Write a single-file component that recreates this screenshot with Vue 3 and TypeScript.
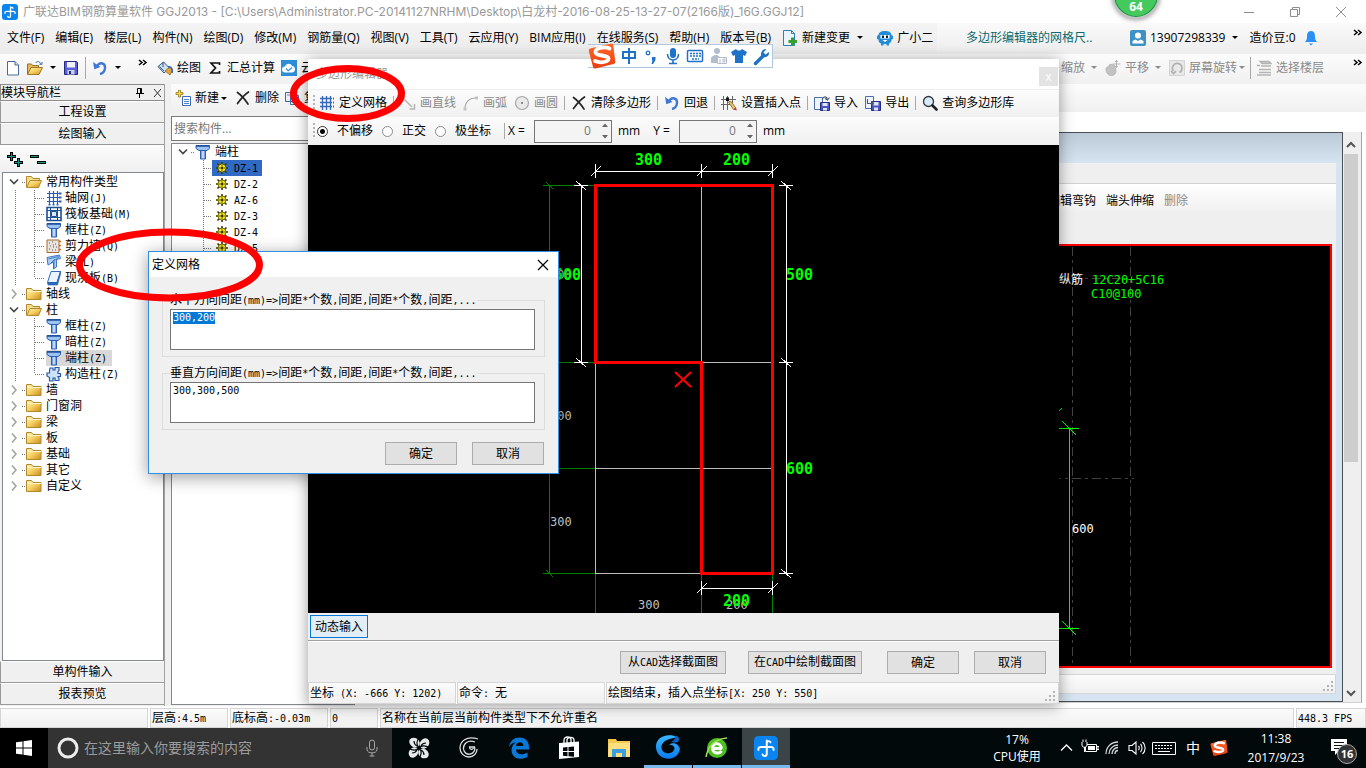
<script setup lang="ts">
import { h, onMounted, ref } from 'vue'

/* Sets Latin runs in a half-width monospace face next to full-width characters. */
const SongText = (props: { t: string }) =>
  h(
    'span',
    { class: 'song' },
    props.t
      .split(/([\x20-\x7e]+)/)
      .filter((s) => s.length > 0)
      .map((s) => (/^[\x20-\x7e]/.test(s) ? h('span', { class: 'half' }, s) : s)),
  )
SongText.props = ['t']

interface TreeRow {
  text: string
  icon: string
  level: number
  open?: boolean
  last?: boolean
  selected?: boolean
}

const menus: string[] = [
  '文件(F)', '编辑(E)', '楼层(L)', '构件(N)', '绘图(D)', '修改(M)', '钢筋量(Q)',
  '视图(V)', '工具(T)', '云应用(Y)', 'BIM应用(I)', '在线服务(S)', '帮助(H)', '版本号(B)',
]

const navRows: TreeRow[] = [
  { text: '常用构件类型', icon: 'folder-open', level: 0, open: true },
  { text: '轴网(J)', icon: 'axis', level: 1 },
  { text: '筏板基础(M)', icon: 'raft', level: 1 },
  { text: '框柱(Z)', icon: 'column', level: 1 },
  { text: '剪力墙(Q)', icon: 'wall', level: 1 },
  { text: '梁(L)', icon: 'beam', level: 1 },
  { text: '现浇板(B)', icon: 'slab', level: 1, last: true },
  { text: '轴线', icon: 'folder', level: 0 },
  { text: '柱', icon: 'folder-open', level: 0, open: true },
  { text: '框柱(Z)', icon: 'column', level: 1 },
  { text: '暗柱(Z)', icon: 'column', level: 1 },
  { text: '端柱(Z)', icon: 'column', level: 1, selected: true },
  { text: '构造柱(Z)', icon: 'puzzle', level: 1, last: true },
  { text: '墙', icon: 'folder', level: 0 },
  { text: '门窗洞', icon: 'folder', level: 0 },
  { text: '梁', icon: 'folder', level: 0 },
  { text: '板', icon: 'folder', level: 0 },
  { text: '基础', icon: 'folder', level: 0 },
  { text: '其它', icon: 'folder', level: 0 },
  { text: '自定义', icon: 'folder', level: 0 },
]

const parts: string[] = ['DZ-1', 'DZ-2', 'AZ-6', 'DZ-3', 'DZ-4', 'DZ-5']

interface Tool {
  text?: string
  icon?: string
  off?: boolean
  sep?: boolean
}
const editorTools: Tool[] = [
  { text: '定义网格', icon: 'grid' },
  { sep: true },
  { text: '画直线', icon: 'line', off: true },
  { text: '画弧', icon: 'arc', off: true },
  { text: '画圆', icon: 'round', off: true },
  { sep: true },
  { text: '清除多边形', icon: 'cross' },
  { sep: true },
  { text: '回退', icon: 'undo' },
  { sep: true },
  { text: '设置插入点', icon: 'insert' },
  { sep: true },
  { text: '导入', icon: 'import' },
  { text: '导出', icon: 'export' },
  { sep: true },
  { text: '查询多边形库', icon: 'search' },
]

const offset = ref('none')
const offsets = [
  { id: 'none', label: '不偏移' },
  { id: 'ortho', label: '正交' },
  { id: 'polar', label: '极坐标' },
]
const dx = ref('0')
const dy = ref('0')
const horizontal = ref('300,200')
const vertical = ref('300,300,500')
const first = ref<HTMLTextAreaElement | null>(null)

onMounted(() => {
  first.value?.focus()
  first.value?.select()
})

const ticksTop = [595, 701, 772]
const ticksRight = [185, 362, 573]
</script>

<template>
  <div class="desktop">
    <svg class="defs" width="0" height="0" aria-hidden="true">
      <defs>
        <linearGradient id="gFolder" x1="0" y1="0" x2="1" y2="1">
          <stop offset="0" stop-color="#fff3b0" /><stop offset=".5" stop-color="#f6cf62" /><stop offset="1" stop-color="#c98a1b" />
        </linearGradient>
        <linearGradient id="gBlue" x1="0" y1="0" x2="1" y2="0">
          <stop offset="0" stop-color="#2f6fd6" /><stop offset=".5" stop-color="#e8f2ff" /><stop offset="1" stop-color="#2f6fd6" />
        </linearGradient>
        <linearGradient id="gS" x1="0" y1="0" x2="0" y2="1">
          <stop offset="0" stop-color="#ff6a2a" /><stop offset="1" stop-color="#ec3c0c" />
        </linearGradient>
        <linearGradient id="gG" x1="0" y1="0" x2="0" y2="1">
          <stop offset="0" stop-color="#38b6ff" /><stop offset="1" stop-color="#0a7df0" />
        </linearGradient>
      </defs>
      <symbol id="brand" viewBox="0 0 16 16">
        <rect width="16" height="16" rx="3" fill="#0a84ee" />
        <path d="M8.500 3v9c0 1.800-2.300 1.800-2.800.3M3 9.300C2.600 7.600 3.600 7.300 5 7.300h6c1.500 0 2.300 .5 2 2M8.500 4.500c.8-1.400 2-1.400 2.500-.3" fill="none" stroke="#fff" stroke-width="1.300" stroke-linecap="round" />
      </symbol>
      <symbol id="newdoc" viewBox="0 0 16 16"><path d="M2.500 1.500h7.500l3.500 3.500v10h-11z" fill="#fff" stroke="#4a6a94" /><path d="M10 1.500V5h3.500" fill="#cfe0f4" stroke="#4a6a94" /></symbol>
      <symbol id="open" viewBox="0 0 16 16"><path d="M.5 14V4h4l1 1.500h6V8" fill="#e7b958" stroke="#94722a" /><path d="M.5 14.500 4 7.500h11.500l-3.500 7z" fill="url(#gFolder)" stroke="#a07a26" /><path d="M8.500 3c1.500-2.200 4.500-1.700 5 .8M15 2v2.300h-2.500" fill="none" stroke="#3e6ca8" /></symbol>
      <symbol id="save" viewBox="0 0 16 16"><path d="M1.500 1.500h12l1 1v12h-13z" fill="#5a60d8" stroke="#23277c" /><path d="M4 2h8v5.500H4z" fill="#eef3fb" /><path d="M4.500 10h7v4.500h-7z" fill="#c9d3e6" /><path d="M6 11h2v3H6z" fill="#26298a" /></symbol>
      <symbol id="undo" viewBox="0 0 16 16"><path d="M5 6.200C8 1.500 13.500 3 13 8c-.3 3.200-2.500 5.500-5 6" fill="none" stroke="#3f78d4" stroke-width="2.400" /><path d="M1 2l1.300 7.200L8.500 7z" fill="#3f78d4" /></symbol>
      <symbol id="paint" viewBox="0 0 16 16"><path d="M1 6.500 6.500 2l6 6-5.500 5z" fill="#cfe0f2" stroke="#33557e" /><path d="M2.500 6.500 7 11M6 2v5" stroke="#33557e" fill="none" /><path d="M8 11l5 4 2.500-5-3.500-2.500z" fill="#e6a23c" stroke="#8a5c14" stroke-width=".7" /><path d="M11 7c3-1 5 2 4 6" fill="none" stroke="#2c62b4" stroke-width="1.500" /></symbol>
      <symbol id="sigma" viewBox="0 0 16 16"><path d="M12.500 5V3H4l4.500 5L4 13h8.500v-2" fill="none" stroke="#111" stroke-width="1.700" /></symbol>
      <symbol id="cloud" viewBox="0 0 16 16"><rect width="16" height="16" fill="#2d8ed6" /><path d="M4 12.500a3 3 0 0 1 0-6C5 3 10 3 11 6c4 0 4 6.500 0 6.500z" fill="#fff" /><path d="M5 8.500l2.300 2.300L11 7.500" stroke="#2d8ed6" fill="none" stroke-width="1.200" /></symbol>
      <symbol id="create" viewBox="0 0 16 16"><path d="M3.500 0h2v2.500H8v2H5.500V7h-2V4.500H1v-2h2.500z" fill="#f7dc45" stroke="#95781a" stroke-width=".8" /><path d="M7.500 6.500h8v9h-8z" fill="#fff" stroke="#3b6db8" /><path d="M9 9.500h5M9 11.500h5M9 13.500h5" stroke="#4f82cc" /></symbol>
      <symbol id="cross" viewBox="0 0 16 16"><path d="M2.500 2.500C6 5 10 9.500 13 14M13.500 2C9 5 5 10 2.500 13.500" stroke="#262626" stroke-width="1.700" fill="none" stroke-linecap="round" /></symbol>
      <symbol id="copy" viewBox="0 0 16 16"><path d="M1.500 2.500h8v9h-8zM6.500 5.500h8v9h-8z" fill="#e6effa" stroke="#3d68a8" /><path d="M8 8.500h5M8 10.500h5M8 12.500h5M3 5h3" stroke="#5d88c4" /></symbol>
      <symbol id="grid" viewBox="0 0 16 16"><path d="M3.500 1v14M7.500 1v14M11.500 1v14M1 3.500h12M1 7.500h12M1 11.500h12" stroke="#3668ba" stroke-width="1.300" /><path d="M14 2.500h1v2h-1zM14 6.500h1v2h-1zM14 10.500h1v2h-1z" fill="#3668ba" /></symbol>
      <symbol id="line" viewBox="0 0 16 16"><path d="M2 2l10 10M14.500 9v5h-5" stroke="#b5b5b5" stroke-width="1.500" fill="none" /></symbol>
      <symbol id="arc" viewBox="0 0 16 16"><path d="M2 14C2 7 6 3 13 3" stroke="#a8a8a8" stroke-width="1.200" fill="none" /><path d="M12 1.500h3v3h-3zM.5 12.500h3v3h-3z" fill="#c4c4c4" /></symbol>
      <symbol id="round" viewBox="0 0 16 16"><circle cx="8" cy="8" r="6.500" fill="#e9e9e9" stroke="#a8a8a8" stroke-width="1.200" /><path d="M7 7h2v2H7z" fill="#8e8e8e" /></symbol>
      <symbol id="insert" viewBox="0 0 16 16"><path d="M2.500 1v14M6.500 1v14M11.500 1v7M0 4.500h15M0 9.500h9" stroke="#666" /><path d="M5 2.500h3v3.500H5z" fill="#111" /><path d="M7.500 7l2-1 5 6.500-2 2z" fill="#eec65d" stroke="#7a5a1e" stroke-width=".8" /><path d="M12.500 14.500l2.500-2 .8 3z" fill="#b33" /></symbol>
      <symbol id="import" viewBox="0 0 16 16"><path d="M.5 2.500h8v12h-8z" fill="#eef4fc" stroke="#4b6fa8" /><path d="M6.500 7.500h9v8h-9z" fill="#4a54c4" stroke="#272c80" /><path d="M8.500 8h5v3h-5zM9 13h4v2.500H9z" fill="#dfe6f5" /><path d="M8 4.500c2-4 5-3 5.500 0M15.500 2.500l-2 2.500-2.500-1.500" fill="none" stroke="#4c5a74" stroke-width="1.100" /></symbol>
      <symbol id="export" viewBox="0 0 16 16"><path d="M.5 1.500h8v12h-8z" fill="#eef4fc" stroke="#4b6fa8" /><path d="M6.500 6.500h9v9h-9z" fill="#4a54c4" stroke="#272c80" /><path d="M8.500 7h5v3.500h-5zM9 12.500h4v3H9z" fill="#dfe6f5" /><path d="M2.500 4v4.500h6M6.500 6.500l2 2-2 2" fill="none" stroke="#4c5a74" stroke-width="1.100" /></symbol>
      <symbol id="search" viewBox="0 0 16 16"><circle cx="6.500" cy="6.500" r="5" fill="#d9ebfa" stroke="#33383f" stroke-width="1.300" /><path d="M10.500 10.500l4 4" stroke="#1d2026" stroke-width="2.600" stroke-linecap="round" /></symbol>
      <symbol id="hand" viewBox="0 0 16 16"><path d="M1 8l2-1.500 1 .5V5l2-1 1 1 1.500-.5L10 6l1 5c0 3-2 4.500-5 4.500S2 13 1 11z" fill="#c2c2c2" stroke="#aaa" stroke-width=".6" /><path d="M11.500 0v8M7.500 4h8M10 1.500h3M10 6.500h3" stroke="#b5b5b5" /></symbol>
      <symbol id="rotate" viewBox="0 0 16 16"><path d="M.5.5h15v15H.5z" fill="#e8e8e8" stroke="#d4d4d4" /><path d="M4 11c-2-5 1.500-8 5-7.500 5 1 5 7 1.500 9M2 11l2.500 2.500L7 11" fill="none" stroke="#b0b0b0" stroke-width="1.700" /></symbol>
      <symbol id="floors" viewBox="0 0 16 16"><path d="M4 1.500h9l2 2H6zM1 5.500h3M5 6h10M3 9.500h12M3 12.500h12M1 15h14" fill="#ccc" stroke="#b4b4b4" stroke-width="1.300" /></symbol>
      <symbol id="more" viewBox="0 0 10 8"><path d="M1 1l3 2.500L1 6M5 1l3 2.500L5 6" fill="none" stroke="#000" stroke-width="1.500" /></symbol>
      <symbol id="change" viewBox="0 0 16 16"><path d="M1.500.5h8l3 3v12h-11z" fill="#eaf5fd" stroke="#2f7fb8" /><path d="M9.500.5v3h3" fill="none" stroke="#2f7fb8" /><path d="M9 7.500h3V10h3v3h-3v3H9v-3H6.500v-3H9z" fill="#35a32b" /></symbol>
      <symbol id="robot" viewBox="0 0 16 16"><path d="M0 6l1.500-1C2 2 4 1 8 1s6 1 6.500 4L16 6v3l-1.500.5c0 2.500-1 3.500-2.500 4v2H9.500V14h-3v1.500H4v-2c-1.500-.5-2.500-1.500-2.500-4L0 9z" fill="#238dd8" /><path d="M3.500 5h9v3.500h-9z" fill="#fff" /><path d="M5 5.500h2v2.500H5zM9 5.500h2v2.500H9z" fill="#123" /><path d="M5.500 10h5L8 12z" fill="#fff" /></symbol>
      <symbol id="user" viewBox="0 0 16 16"><rect width="16" height="16" rx="2" fill="#3e91c4" /><circle cx="8" cy="5.500" r="3" fill="#fff" /><path d="M2.500 13.500V11l3-1.500L8 11l2.500-1.500 3 1.500v2.500z" fill="#fff" /></symbol>
      <symbol id="bell" viewBox="0 0 14 16"><path d="M7 1c3.500 0 4 3 4 6s1 3.500 2 5H1c1-1.500 2-2 2-5s.5-6 4-6z" fill="#2b90f5" /><path d="M5 13.500h4L7 15.500z" fill="#2b90f5" /></symbol>
      <symbol id="folder" viewBox="0 0 16 16"><path d="M.5 13.500v-11h5l1.500 2h8v9z" fill="url(#gFolder)" stroke="#b0892e" /><path d="M1 5.500h14" stroke="#fff7d0" /></symbol>
      <symbol id="folder-open" viewBox="0 0 16 16"><path d="M.5 13V2.500h5L7 4.500h6.500V7" fill="#f7dc8c" stroke="#b0892e" /><path d="M.7 13.500 4 6.500h11.500l-3 7z" fill="url(#gFolder)" stroke="#b0892e" /></symbol>
      <symbol id="axis" viewBox="0 0 16 16"><path d="M3.500 1v13M7.500 1v13M11.500 1v13M1 3.500h12M1 7.500h12M1 11.500h12" stroke="#2b5cae" stroke-width="1.200" /><path d="M13 2.500h2.500v2H13zM13 6.500h2.500v2H13zM13 10.500h2.500v2H13zM2.500 14h2v1.500h-2zM6.500 14h2v1.500h-2zM10.500 14h2v1.500h-2z" fill="#2b5cae" /></symbol>
      <symbol id="raft" viewBox="0 0 16 16"><path d="M1 1.500h14v13H1z" fill="#fff" stroke="#1d4f93" stroke-width="1.600" /><path d="M4.500 2v12M11.500 2v12M1 4.500h14M1 11.500h14" stroke="#1d4f93" /><path d="M5.500 5.500h5v5h-5z" fill="#dbe9fa" stroke="#1d4f93" /></symbol>
      <symbol id="column" viewBox="0 0 16 16"><path d="M1 1.500h13.500v3L12 6.500H4L1 4.500z" fill="#9cc3f5" stroke="#2a5faf" /><path d="M1 2h13.500" stroke="#1c4c97" stroke-width="1.500" /><path d="M5.500 6.500h5v8.500h-5z" fill="url(#gBlue)" stroke="#2a5faf" /></symbol>
      <symbol id="wall" viewBox="0 0 16 16"><path d="M1 2h12v12.500H1z" fill="#e9e4df" stroke="#a8672d" /><path d="M13 3.500h2M13 7.500h2M13 11.500h2" stroke="#d06a1b" stroke-width="1.500" /><path d="M3 5h1M6 4h1M9 6h1M4 8h1M7 9h1M10 9h1M3 11h1M6 12h1M9 12h1M7 7h1" stroke="#555" /></symbol>
      <symbol id="beam" viewBox="0 0 16 16"><path d="M1 3.500 13.500 1l1 3.500-4 1V13l-3 2V8L2 11z" fill="#a9cdf5" stroke="#3c78c4" /><path d="M2.500 5l10-2.500M5 9l4-4M8 14V7l5-4" stroke="#2f6ab8" stroke-width=".8" fill="none" /></symbol>
      <symbol id="slab" viewBox="0 0 16 16"><path d="M5 1.500h9.500L11 12.500H1.500z" fill="#eaf3ff" stroke="#2f6cc0" /><path d="M1.500 12.500H11l3.500-11v2.500L11.500 15H2z" fill="#2f6cc0" stroke="#245aa8" stroke-width=".6" /></symbol>
      <symbol id="puzzle" viewBox="0 0 16 16"><path d="M4 2h3v2h2V1.500h4v3l-1 1v2h2.500v3H12l1 1.500v2.500H9V12H7v3H3.500v-3.500L1 10V7h2.500V5z" fill="#cfe1f8" stroke="#245aa8" stroke-width="1.200" /></symbol>
      <symbol id="gear" viewBox="0 0 12 12"><path d="M6 0v12M0 6h12M1.500 1.500l9 9M10.500 1.500l-9 9" stroke="#3c3900" stroke-width="1.600" /><circle cx="6" cy="6" r="4" fill="#f2e61e" stroke="#55500a" stroke-width=".8" /><path d="M6 3v6M3 6h6" stroke="#55500a" stroke-width=".8" /><circle cx="6" cy="6" r="1.200" fill="#3c3900" /></symbol>
      <symbol id="sogou" viewBox="0 0 28 28"><path d="M2 6.500 23 1.500q2-.3 2.300 1.500l2 16.500q.2 2-1.800 2.500L7.500 26.500q-2 .3-2.500-1.500L.8 9Q.5 7 2 6.500z" fill="url(#gS)" /><path d="M21.500 6.500C16 4 7 6 7.500 10.500c.5 4 12.500 2 13 6 .3 3.500-8 5-13.500 2.500" fill="none" stroke="#fff" stroke-width="3.800" stroke-linecap="round" /></symbol>
      <symbol id="grip" viewBox="0 0 12 12"><path d="M8 0h2v2H8zM8 4h2v2H8zM4 4h2v2H4zM8 8h2v2H8zM4 8h2v2H4zM0 8h2v2H0z" fill="#b4b4b4" /></symbol>
    </svg>

    <header class="titlebar">
      <svg class="i16"><use href="#brand" /></svg>
      <span class="caption">广联达BIM钢筋算量软件 GGJ2013 - [C:\Users\Administrator.PC-20141127NRHM\Desktop\白龙村-2016-08-25-13-27-07(2166版)_16G.GGJ12]</span>
      <div class="winbtns">
        <button type="button" aria-label="最小化"><svg width="12" height="12" viewBox="0 0 12 12"><path d="M1 6.500h10" stroke="#8c8c8c" /></svg></button>
        <button type="button" aria-label="还原"><svg width="12" height="12" viewBox="0 0 12 12"><path d="M1.500 3.500h7v7h-7zM3.500 3.500v-2h7v7h-2" fill="none" stroke="#8c8c8c" /></svg></button>
        <button type="button" aria-label="关闭"><svg width="12" height="12" viewBox="0 0 12 12"><path d="M1 1l10 10M11 1L1 11" stroke="#8c8c8c" /></svg></button>
      </div>
    </header>

    <nav class="menubar">
      <div class="menus">
        <button v-for="m in menus" :key="m" type="button">{{ m }}</button>
        <button type="button" class="withicon"><svg class="i16"><use href="#change" /></svg>新建变更<i class="dd"></i></button>
        <button type="button" class="withicon"><svg class="i16"><use href="#robot" /></svg>广小二</button>
      </div>
      <div class="news"><a href="#news">多边形编辑器的网格尺..</a></div>
      <div class="account">
        <button type="button" class="withicon"><svg class="i16"><use href="#user" /></svg>13907298339<i class="dd"></i></button>
        <span>造价豆:0</span>
        <svg class="bell"><use href="#bell" /></svg>
        <svg class="more"><use href="#more" /></svg>
      </div>
    </nav>

    <div class="toolbar">
      <div class="strip files">
        <button type="button" aria-label="新建"><svg class="i16"><use href="#newdoc" /></svg></button>
        <button type="button" aria-label="打开"><svg class="i16"><use href="#open" /></svg><i class="dd"></i></button>
        <button type="button" aria-label="保存"><svg class="i16"><use href="#save" /></svg></button>
        <i class="sep"></i>
        <button type="button" aria-label="撤销"><svg class="i16"><use href="#undo" /></svg><i class="dd"></i></button>
        <svg class="more"><use href="#more" /></svg>
      </div>
      <div class="strip draw">
        <button type="button"><svg class="i16"><use href="#paint" /></svg>绘图</button>
        <button type="button"><svg class="i16"><use href="#sigma" /></svg>汇总计算</button>
        <button type="button"><svg class="i16"><use href="#cloud" /></svg>云检查</button>
      </div>
      <div class="strip view">
        <button type="button" disabled>缩放<i class="dd"></i></button>
        <button type="button" disabled><svg class="i16"><use href="#hand" /></svg>平移<i class="dd"></i></button>
        <button type="button" disabled><svg class="i16"><use href="#rotate" /></svg>屏幕旋转<i class="dd near"></i></button>
        <i class="sep"></i>
        <button type="button" disabled><svg class="i16"><use href="#floors" /></svg>选择楼层</button>
        <svg class="more"><use href="#more" /></svg>
      </div>
    </div>

    <main class="work">
      <aside class="nav">
        <div class="navhead">
          <SongText t="模块导航栏" />
          <svg width="30" height="12" viewBox="0 0 30 12"><path d="M3.500 1.500h4v5h-4zM6.500 2v4M2 6.500h8M5.500 7v4" fill="none" stroke="#000" /><path d="M20 2l7 8M27 2l-7 8" stroke="#333" /></svg>
        </div>
        <button type="button" class="bar"><SongText t="工程设置" /></button>
        <button type="button" class="bar"><SongText t="绘图输入" /></button>
        <div class="expand">
          <svg width="44" height="20" viewBox="0 0 44 20"><g stroke="#000" stroke-width="3"><path d="M5.500 2v9M1 6.500h9M12.500 8v9M8 12.500h9M24 6.500h9M31 12.500h9" /></g><g stroke="#159488"><path d="M5.500 3v7M2 6.500h7M12.500 9v7M9 12.500h7M25 6.500h7M32 12.500h7" /></g></svg>
        </div>
        <ul class="tree">
          <li v-for="(r, i) in navRows" :key="i">
            <svg v-if="r.level === 0" width="23" height="16" viewBox="0 0 23 16">
              <path v-if="r.open" d="M7 5.500l4 4 4-4" fill="none" stroke="#444" stroke-width="1.600" />
              <path v-else d="M9 3.500l4 4.500-4 4.500" fill="none" stroke="#a0a0a0" stroke-width="1.500" />
              <path d="M19 8.500h4" stroke="#777" stroke-dasharray="1 1" />
            </svg>
            <svg v-else width="43" height="16" viewBox="0 0 43 16">
              <path :d="r.last ? 'M12.500 0v16M31.500 0v8M32 8.500h10' : 'M12.500 0v16M31.500 0v16M32 8.500h10'" fill="none" stroke="#777" stroke-dasharray="1 1" />
            </svg>
            <span class="node" :class="{ picked: r.selected, leaf: r.level === 1 }"><svg class="i16"><use :href="'#' + r.icon" /></svg><SongText :t="r.text" /></span>
          </li>
        </ul>
        <button type="button" class="bar"><SongText t="单构件输入" /></button>
        <button type="button" class="bar"><SongText t="报表预览" /></button>
      </aside>

      <div class="rest">
        <div class="strip parttools">
          <button type="button"><svg class="i16"><use href="#create" /></svg>新建<i class="dd near"></i></button>
          <button type="button"><svg class="i16"><use href="#cross" /></svg>删除</button>
          <button type="button"><svg class="i16"><use href="#copy" /></svg>复制</button>
        </div>
        <div class="cols">
          <section class="parts">
            <input class="find" type="text" placeholder="搜索构件..." aria-label="搜索构件" />
            <ul class="tree">
              <li>
                <svg width="23" height="16" viewBox="0 0 23 16"><path d="M7 5.500l4 4 4-4" fill="none" stroke="#444" stroke-width="1.600" /><path d="M19 8.500h4" stroke="#777" stroke-dasharray="1 1" /></svg>
                <span class="node"><svg class="i16"><use href="#column" /></svg><SongText t="端柱" /></span>
              </li>
              <li v-for="(p, i) in parts" :key="p">
                <svg width="40" height="16" viewBox="0 0 40 16"><path d="M31.500 0v16M32 8.500h8" fill="none" stroke="#777" stroke-dasharray="1 1" /></svg>
                <span class="part" :class="{ active: i === 0 }"><svg class="i12"><use href="#gear" /></svg><SongText :t="p" /></span>
              </li>
            </ul>
          </section>

          <section class="mdi">
            <div class="inner">
              <div class="innerbody">
                <div class="barops">
                  <span>编辑弯钩</span><span>端头伸缩</span><span class="dim">删除</span>
                </div>
                <div class="section">
                  <svg width="278" height="420" viewBox="1052 246 278 420">
                    <g fill="none" stroke="#414141" stroke-dasharray="9 4 3 4" shape-rendering="crispEdges"><path d="M1072.500 247v418M1130.500 247v418M1052 278.500h78M1052 478.500h82" /></g>
                    <g fill="none" stroke="#0f0" shape-rendering="crispEdges"><path d="M1069.500 428v200M1058 428.500h21M1062 421l14 14M1058 628.500h21M1062 621l14 14M1058 412l4-4" /></g>
                    <text x="1059" y="284" class="cad" fill="#fff">纵筋</text>
                    <text x="1092" y="284" class="cad" fill="#0f0">12C20+5C16</text>
                    <text x="1091" y="298" class="cad" fill="#0f0">C10@100</text>
                    <text x="1072" y="533" class="cad" fill="#fff">600</text>
                  </svg>
                </div>
                <div class="innerstatus"><svg class="i12"><use href="#grip" /></svg></div>
              </div>
            </div>
            <div class="scroll">
              <svg width="16" height="18" viewBox="0 0 16 18"><path d="M4 11l4-4 4 4" fill="none" stroke="#555" stroke-width="2" /></svg>
              <i class="thumb"></i>
              <svg width="16" height="18" viewBox="0 0 16 18"><path d="M4 7l4 4 4-4" fill="none" stroke="#555" stroke-width="2" /></svg>
            </div>
          </section>
        </div>
      </div>
    </main>

    <footer class="status">
      <span class="c1"></span>
      <span class="c2"><SongText t="层高:4.5m" /></span>
      <span class="c3"><SongText t="底标高:-0.03m" /></span>
      <span class="c4"><SongText t="0" /></span>
      <span class="c5"><SongText t="名称在当前层当前构件类型下不允许重名" /></span>
      <span class="c6"><SongText t="448.3 FPS" /></span>
    </footer>

    <div class="taskbar">
      <button type="button" class="start" aria-label="开始"><svg width="16" height="16" viewBox="0 0 16 16"><path d="M0 2.300 6.500 1.400v6.100H0zM7.500 1.200 16 0v7.500H7.500zM0 8.500h6.500v6.100L0 13.700zM7.500 8.500H16V16l-8.500-1.200z" fill="#fff" /></svg></button>
      <label class="cortana">
        <svg width="22" height="22" viewBox="0 0 22 22"><circle cx="11" cy="11" r="9" fill="none" stroke="#ececec" stroke-width="3" /></svg>
        <input type="text" placeholder="在这里输入你要搜索的内容" aria-label="搜索" />
        <svg width="12" height="18" viewBox="0 0 12 18"><rect x="3.500" y="1" width="5" height="10" rx="2.500" fill="none" stroke="#aaa" /><path d="M1 8v2.500C1 15 11 15 11 10.500V8M6 14v3M3.500 17h5" fill="none" stroke="#aaa" /></svg>
      </label>
      <div class="apps">
        <button type="button" aria-label="应用"><svg width="24" height="24" viewBox="0 0 24 24"><g fill="#e8eaea"><ellipse cx="7.500" cy="6.500" rx="5.500" ry="4.500" transform="rotate(35 7.500 6.500)" /><ellipse cx="17.500" cy="7.500" rx="5.500" ry="4.500" transform="rotate(125 17.500 7.500)" /><ellipse cx="16.500" cy="17.500" rx="5.500" ry="4.500" transform="rotate(35 16.500 17.500)" /><ellipse cx="6.500" cy="16.500" rx="5.500" ry="4.500" transform="rotate(125 6.500 16.500)" /></g><path d="M12 12C10 10 9 6 12 1.500M12 12c2-2 6-3 10.500 0M12 12c2 2 3 6 0 10.500M12 12c-2 2-6 3-10.500 0M7 5c0 2 1 4 3 5M19 7c-2 0-4 1-5 3M17 19c0-2-1-4-3-5M5 17c2 0 4-1 5-3" stroke="#01090b" stroke-width="1.200" fill="none" /></svg></button>
        <button type="button" aria-label="浏览器"><svg width="22" height="22" viewBox="0 0 22 22"><path d="M20 2C8-2 2 5 2 11c0 5 4 9 9 9s8-4 8-8M17 5C10 2 5 7 5.500 12c.5 4 4 6 7 5 3-.8 5-4 4-7h-5c0 3 3 3 4 1" fill="none" stroke="#ddd" stroke-width="1.300" /></svg></button>
        <button type="button" aria-label="Edge"><svg width="22" height="22" viewBox="0 0 22 22"><path d="M1 10C2 3.500 6.500.5 11.500.5c6 0 9.500 4 9.500 9.500v2.500H8c.3 5.500 7 6 11.500 3v4.500c-8 4-16 1-16-7 0-4 2-6.500 5-7.800C4.500 5.500 2.500 7.500 1 10zm7-1h7.500c0-5-7-5-7.500 0z" fill="#0a78d7" /></svg></button>
        <button type="button" aria-label="商店"><svg width="24" height="24" viewBox="0 0 24 24"><path d="M2 7l20-1.500V21L2 23z" fill="#fff" /><path d="M7 8V4c0-4 7-4 7 0v3M10 7V3.500c1-3 7-3 7 .5v2" fill="none" stroke="#fff" stroke-width="1.300" /><path d="M6 11.500l4.500-.5v4H6zM11.500 11l5.500-.6V15h-5.500zM6 16h4.500v4.200L6 19.700zM11.500 16H17v4.800l-5.500-.5z" fill="#01090b" /></svg></button>
        <button type="button" aria-label="资源管理器"><svg width="22" height="20" viewBox="0 0 22 20"><path d="M0 1h8l1 2h13v16H0z" fill="#f4c84c" /><path d="M1 5h21v14H0z" fill="#fddf82" /><path d="M4 19v-8h14v8h-4v-4H8v4z" fill="#3a9fdc" /></svg></button>
        <button type="button" class="run" aria-label="浏览器二"><svg width="26" height="26" viewBox="0 0 24 24"><path d="M22 2C8-3 0 4 1 12c1 12 20 14 22 1-1-5-6-7-10-4 3 0 5 1 5 4-2 6-12 5-12-2C6 5 14 3 22 2z" fill="url(#gG)" /><path d="M18 1c3 0 5 2 4 4-1 3-5 2-7 1 2 0 4-2 3-5z" fill="#0c62c4" /></svg></button>
        <button type="button" class="run" aria-label="360"><svg width="24" height="24" viewBox="0 0 24 24"><circle cx="12" cy="12" r="10" fill="#4cc01f" /><path d="M17 12.500H7.500c0-7 8.500-6 9 0M7.500 13c1 5 7 5 9 2" fill="none" stroke="#fff" stroke-width="3" /><path d="M1 21C3 10 10 3 22 2" fill="none" stroke="#9be052" stroke-width="1.500" /></svg></button>
        <button type="button" class="run on" aria-label="GGJ2013"><svg width="24" height="24"><use href="#brand" /></svg></button>
      </div>
      <div class="tray">
        <span class="two cpu">17%<br />CPU使用</span>
        <svg width="18" height="20" viewBox="0 0 18 20"><path d="M3 12.500l5.500-5.500 5.500 5.500" fill="none" stroke="#fff" stroke-width="1.300" /></svg>
        <svg width="18" height="20" viewBox="0 0 18 20"><path d="M4.500 6.500h11v7h-11zM16 8.500h2v3h-2z" fill="none" stroke="#fff" /><path d="M7 8h7v4H7z" fill="#fff" /><path d="M1 4v3c0 3 5 3 5 0V4M2 4V1.500M5 4V1.500M3.500 9v5" fill="#01090b" stroke="#fff" /></svg>
        <svg width="18" height="20" viewBox="0 0 18 20"><g fill="none" stroke="#d8d8d8" stroke-width="1.300"><path d="M2 16C2 9 7 4 14 4M5 16c0-5 4-9 9-9M8 16c0-4 3-6.500 6-6.500M11 16c0-2 1-3.500 3-3.500" /></g></svg>
        <svg width="20" height="20" viewBox="0 0 20 20"><path d="M2 7.500h3l4-3.500v12l-4-3.500H2zM11.500 8c1 1 1 3 0 4M13.500 6c2 2 2 6 0 8M15.500 4c3.500 3 3.500 9 0 12" fill="none" stroke="#fff" stroke-width="1.100" /></svg>
        <svg width="24" height="16" viewBox="0 0 24 16"><path d="M.5 2.500h23v12H.5z" fill="none" stroke="#fff" /><path d="M3 5.500h18M3 8.500h18" stroke="#fff" stroke-dasharray="2 1" /><path d="M6 11.500h12" stroke="#fff" /></svg>
        <span class="lang">中</span>
        <svg width="18" height="18"><use href="#sogou" /></svg>
        <span class="two clock">11:38<br />2017/9/23</span>
        <div class="notes">
          <svg width="16" height="16" viewBox="0 0 16 16"><path d="M0 0h16v12H8l-4 4v-4H0z" fill="#fff" /><path d="M3 3.500h10M3 6.500h10M3 9.500h7" stroke="#111" /></svg>
          <b>16</b>
        </div>
      </div>
    </div>

    <section class="editor">
      <header><span>多边形编辑器</span><button type="button" aria-label="关闭">x</button></header>
      <div class="strip edtools">
        <i class="dots"></i>
        <template v-for="(t, i) in editorTools" :key="i">
          <i v-if="t.sep" class="sep"></i>
          <button v-else type="button" class="tool" :disabled="t.off"><svg class="i16"><use :href="'#' + t.icon" /></svg>{{ t.text }}</button>
        </template>
      </div>
      <div class="strip coords">
        <i class="dots"></i>
        <div class="radios">
          <label v-for="o in offsets" :key="o.id"><input v-model="offset" type="radio" name="offset" :value="o.id" /><SongText :t="o.label" /></label>
        </div>
        <i class="sep"></i>
        <label class="axisfield">X =<span class="num"><input v-model="dx" type="text" /><svg width="8" height="18" viewBox="0 0 8 18"><path d="M1 5l3-3.500L7 5zM1 13l3 3.500L7 13z" fill="#666" /></svg></span>mm</label>
        <label class="axisfield">Y =<span class="num"><input v-model="dy" type="text" /><svg width="8" height="18" viewBox="0 0 8 18"><path d="M1 5l3-3.500L7 5zM1 13l3 3.500L7 13z" fill="#666" /></svg></span>mm</label>
      </div>
      <div class="canvas">
        <svg viewBox="308 145 751 468">
          <g fill="none" stroke="#bdbdbd">
            <path d="M595.500 362V573.500M701.500 185V573.500M701 362.500h71M595 468.500h177M595 573.500h107" />
          </g>
          <g fill="none" stroke="#008000" shape-rendering="crispEdges">
            <path d="M549.500 185v388M543 185.500h52M543 362.500h52M543 468.500h52M543 573.500h52M595.500 574v39M701.500 574v39M772.500 574v39M546 182l7 7M546 570l7 7" />
          </g>
          <path d="M595.500 185.500H772.500V573.500H701.500V362.500H595.500Z" fill="none" stroke="#f00" stroke-width="3" />
          <path d="M675 372l16 15M691 372l-16 15" stroke="#f00" stroke-width="2" />
          <g fill="none" stroke="#fff" shape-rendering="crispEdges">
            <path d="M595 171.500h177M581.500 185v177M786.500 185v388M701 588.500h71" />
            <path v-for="x in ticksTop" :key="'t' + x" :d="`M${x + 0.5} 164v14M${x - 4} 176l10-10`" />
            <path v-for="x in [701, 772]" :key="'b' + x" :d="`M${x + 0.5} 581v14M${x - 4} 593l10-10`" />
            <path v-for="y in [185, 362]" :key="'l' + y" :d="`M574 ${y + 0.5}h14M576 ${y - 4}l10 9`" />
            <path v-for="y in ticksRight" :key="'r' + y" :d="`M779 ${y + 0.5}h14M781 ${y - 4}l10 9`" />
          </g>
          <g class="cad" fill="#c0c0c0">
            <text x="550" y="279">500</text>
            <text x="550" y="420">300</text>
            <text x="550" y="526">300</text>
            <text x="638" y="609">300</text>
            <text x="726" y="609">200</text>
          </g>
          <g class="dimtext" fill="#0f0">
            <text x="635" y="165">300</text>
            <text x="723" y="165">200</text>
            <text x="554" y="280">500</text>
            <text x="786" y="280">500</text>
            <text x="786" y="474">600</text>
            <text x="723" y="606">200</text>
          </g>
        </svg>
      </div>
      <div class="dyn"><button type="button"><SongText t="动态输入" /></button></div>
      <div class="actions">
        <button type="button" class="push cad1"><SongText t="从CAD选择截面图" /></button>
        <button type="button" class="push cad2"><SongText t="在CAD中绘制截面图" /></button>
        <button type="button" class="push"><SongText t="确定" /></button>
        <button type="button" class="push"><SongText t="取消" /></button>
      </div>
      <div class="edstatus">
        <span><SongText t="坐标 (X: -666 Y: 1202)" /></span>
        <span><SongText t="命令: 无" /></span>
        <span class="wide"><SongText t="绘图结束，插入点坐标[X: 250 Y: 550]" /><svg class="i12"><use href="#grip" /></svg></span>
      </div>
    </section>

    <section class="dialog" role="dialog" aria-label="定义网格">
      <header><span>定义网格</span><button type="button" aria-label="关闭"><svg width="12" height="12" viewBox="0 0 12 12"><path d="M1 1l10 10M11 1L1 11" stroke="#000" stroke-width="1.200" /></svg></button></header>
      <form @submit.prevent>
        <fieldset>
          <legend><SongText t="水平方向间距(mm)=>间距*个数,间距,间距*个数,间距,..." /></legend>
          <textarea ref="first" v-model="horizontal" aria-label="水平方向间距" spellcheck="false"></textarea>
        </fieldset>
        <fieldset>
          <legend><SongText t="垂直方向间距(mm)=>间距*个数,间距,间距*个数,间距,..." /></legend>
          <textarea v-model="vertical" aria-label="垂直方向间距" spellcheck="false"></textarea>
        </fieldset>
        <div class="okrow">
          <button type="submit" class="push"><SongText t="确定" /></button>
          <button type="button" class="push"><SongText t="取消" /></button>
        </div>
      </form>
    </section>

    <div class="ime">
      <svg class="logo"><use href="#sogou" /></svg>
      <svg width="150" height="22" viewBox="0 0 150 22">
        <g fill="none" stroke="#1e72c8" stroke-width="2"><path d="M1 7h12v6H1zM7 3v16" /><circle cx="26" cy="8" r="1.800" stroke-width="1.300" /></g>
        <path d="M30 12h3.500v3l-2.500 4h-1.500l1-3.500H30z" fill="#1e72c8" />
        <rect x="48" y="3" width="6" height="10" rx="3" fill="#1e72c8" />
        <path d="M45.500 9c0 8 11 8 11 0M51 15v3M47 18.500h8" fill="none" stroke="#1e72c8" stroke-width="1.600" />
        <rect x="65.500" y="5.500" width="15" height="11" rx="1" fill="none" stroke="#1e72c8" stroke-width="1.500" />
        <path d="M68 8.500h11M68 11h11M70 14h7" stroke="#1e72c8" stroke-width="1.300" stroke-dasharray="2 1" />
        <circle cx="95" cy="6" r="3" fill="#b3bdcb" /><path d="M89 18v-4c0-3 3-4 6-4l3 2v6z" fill="#b3bdcb" /><path d="M95.500 12.500h9v6h-9z" fill="#fff" stroke="#b3bdcb" /><path d="M98 14v4M101 14h2v3h-2z" stroke="#b3bdcb" fill="none" />
        <path d="M110 7l5-3c1.500 2 4.500 2 6 0l5 3-2 4-2-1v8h-8v-8l-2 1z" fill="#1e72c8" transform="translate(-1 0)" />
        <path d="M133.500 18.500 141 11" stroke="#1e72c8" stroke-width="3.400" stroke-linecap="round" />
        <path d="M144.500 4l-3 3.500 2 2 3.500-2.500c.5 4-3 6-6 5-2.500-1-2.500-4-1-6 1-1.500 3-2.300 4.500-2z" fill="#1e72c8" />
      </svg>
    </div>

    <div class="ball"><b>64</b></div>

    <svg class="marks" width="420" height="320" viewBox="0 0 420 320" aria-hidden="true">
      <g fill="none" stroke="#f00" stroke-width="7">
        <ellipse cx="347.500" cy="93.500" rx="54" ry="25" />
        <ellipse cx="169.500" cy="265" rx="90" ry="33" />
      </g>
    </svg>
  </div>
</template>

<style>
html, body, #app { height: 100%; }
body { margin: 0; overflow: hidden; }
.song { font-family: "Liberation Sans", "Noto Sans CJK SC", sans-serif; font-size: 12px; line-height: 16px; white-space: nowrap; }
.song .half { font-family: "DejaVu Sans Mono", monospace; font-size: 10px; white-space: pre; }
</style>

<style scoped>
.desktop { position: relative; display: flex; flex-direction: column; min-height: 100vh; height: 100%; overflow: hidden; background: #f0f0f0; color: #000; font-family: "Open Sans", "Noto Sans CJK SC", sans-serif; font-size: 12px; line-height: 16px; }
.desktop * { box-sizing: border-box; }
button { display: flex; align-items: center; margin: 0; padding: 0; border: 0; background: none; color: inherit; font: inherit; white-space: nowrap; }
svg { display: block; flex: none; }
.defs, .marks { position: absolute; left: 0; top: 0; }
.marks { pointer-events: none; }
.i16 { width: 16px; height: 16px; }
.i12 { width: 12px; height: 12px; }
.dd { flex: none; border: 3px solid transparent; border-top-color: currentColor; border-bottom: 0; margin: 0 3px 0 7px; }
.dd.near { margin: 0 3px 0 2px; }
.sep { flex: none; width: 1px; height: 14px; background: #a8a8a8; }
.more { width: 10px; height: 8px; }
.strip { display: flex; align-items: center; background: linear-gradient(#fcfcfc, #f0f0f0); }
.strip button:disabled { color: #8a8a8a; }

.titlebar { display: flex; flex: none; align-items: center; height: 23px; padding: 0 2px 0 2px; background: #fff; color: #999; }
.caption { flex: 1; padding-left: 5px; font-family: Inter, "Noto Sans CJK SC", sans-serif; white-space: nowrap; }
.winbtns { display: flex; }
.winbtns button { justify-content: center; width: 46px; height: 20px; }
.menubar { display: flex; flex: none; height: 31px; background: linear-gradient(#f4f4f4, #ebebeb); }
.menus { display: flex; flex: 1; align-items: center; gap: 11px; min-width: 0; padding: 0 0 2px 7px; overflow: hidden; }
.withicon .i16 { margin-right: 4px; }
.news { flex: none; width: 188px; padding: 7px 0 0 29px; border-radius: 3px; background: linear-gradient(#fafafa, #ededed); }
.news a { color: #0b6a70; text-decoration: none; }
.account { display: flex; flex: none; align-items: center; gap: 8px; width: 241px; padding: 0 3px 2px 5px; background: linear-gradient(#fafafa, #ededed); }
.bell { width: 14px; height: 16px; }
.account .more, .view .more { margin: 0 0 10px auto; }

.toolbar { display: flex; flex: none; height: 30px; }
.files { width: 151px; padding-left: 5px; gap: 6px; padding-bottom: 3px; }
.files .more { margin: 0 3px 10px auto; }
.files .sep, .view .sep { height: 22px; }
.files .dd { margin-right: 1px; }
.draw { flex: 1; gap: 6px; padding: 0 0 3px 6px; }
.draw .i16, .view .i16, .parttools .i16 { margin-right: 4px; }
.view { width: 305px; gap: 5px; padding: 0 3px 3px 0; }
.view .dd { margin-left: 6px; }
.view .dd.near { margin: 0 0 0 2px; }

.work { display: flex; flex: 1; min-height: 0; background: #f0f0f0; }
.nav { display: flex; flex: none; flex-direction: column; width: 165px; height: 100%; padding-bottom: 1px; border-right: 1px solid #a0a0a0; }
.navhead { display: flex; align-items: center; justify-content: space-between; height: 17px; border: 1px solid #8c8c8c; border-right: 0; }
.bar { justify-content: center; height: 22px; border-top: 1px solid #fff; border-bottom: 1px solid #999; border-left: 1px solid #999; }
.expand { height: 27px; padding: 5px 0 0 6px; background: linear-gradient(#fcfcfc, #f0f0f0); }
.tree { flex: 1; margin: 0 0 0 2px; padding: 1px 0 0; border: 1px solid #828790; background: #fff; list-style: none; overflow: hidden; }
.tree li { display: flex; align-items: center; height: 16px; }
.node { display: flex; align-items: center; gap: 4px; height: 16px; padding-right: 5px; }
.node.leaf { gap: 3px; }
.node.picked { background: #d8d8d8; }
.part { display: flex; align-items: center; gap: 6px; height: 16px; padding: 0 4px 0 4px; }
.part.active { background: #316ac5; color: #000; }

.rest { display: flex; flex: 1; flex-direction: column; min-width: 0; padding-left: 6px; }
.parttools { flex: none; height: 28px; padding-left: 4px; gap: 5px; }
.cols { display: flex; flex: 1; min-height: 0; background: #fff; }
.parts { display: flex; flex: none; flex-direction: column; width: 184px; padding: 4px 0 1px; background: #f0f0f0; }
.find { width: 100%; height: 25px; padding: 0 2px; border: 1px solid #7a7a7a; background: #fff; font: inherit; outline: 0; }
.find::placeholder { color: #777; }
.parts .tree { margin: 2px 0 0; padding: 0; }
.mdi { display: flex; flex: 1; min-width: 0; margin: 20px 4px 3px 4px; border-right: 1px solid #a5a5a5; border-bottom: 1px solid #d0d0d0; }
.inner { display: flex; flex: 1; min-width: 0; padding: 30px 6px 7px; border: 1px solid #4a4f55; background: linear-gradient(#bccad8, #d6e3f0 30px); }
.innerbody { display: flex; flex: 1; flex-direction: column; min-width: 0; padding-top: 20px; background: #efefef; }
.barops { display: flex; flex: none; justify-content: flex-end; gap: 10px; height: 61px; padding: 9px 148px 0 0; border-top: 1px solid #d2d2d2; background: linear-gradient(#fff, #efefef 30px); white-space: nowrap; }
.dim { color: #8a8a8a; }
.section { display: flex; flex: 1; justify-content: flex-end; min-height: 0; margin-right: 4px; border: 2px solid #f00; background: #000; overflow: hidden; }
.cad { font-family: "DejaVu Sans Mono", "Noto Sans CJK SC", monospace; font-size: 12px; }
.innerstatus { display: flex; flex: none; align-items: flex-end; justify-content: flex-end; height: 20px; margin-top: 6px; border: 1px solid #d6d6d6; background: linear-gradient(#fcfcfc, #f0f0f0); }
.scroll { display: flex; flex-direction: column; width: 18px; padding-top: 4px; background: #efefef; }
.thumb { width: 14px; height: 308px; margin-bottom: auto; margin-left: 1px; background: #cdcdcd; }

.status { display: flex; flex: none; gap: 2px; height: 22px; padding-top: 2px; background: #fff; }
.status span { flex: none; }
.status > span { height: 20px; padding: 1px 1px 0; border: 1px solid #d5d5d5; background: linear-gradient(#fbfbfb, #f0f0f0); }
.c1 { width: 148px; }
.c2 { width: 78px; }
.c3 { width: 98px; }
.c4 { width: 48px; }
.status .c5 { flex: 1; }
.c6 { width: 70px; }

.taskbar { display: flex; flex: none; height: 40px; background: #01090b; color: #fff; }
.start { justify-content: center; width: 48px; background: #000; }
.cortana { display: flex; align-items: center; width: 344px; padding: 0 14px 0 9px; background: #333; }
.cortana input { flex: 1; min-width: 0; margin: 0 0 0 5px; padding: 0; border: 0; background: none; color: #fff; font: inherit; font-size: 14px; outline: 0; }
.cortana input::placeholder { color: #9b9b9b; }
.apps { display: flex; padding-left: 2px; }
.apps button { justify-content: center; width: 48px; margin-right: 1px; border-top: 3px solid transparent; border-bottom: 3px solid transparent; }
.apps .run { border-bottom-color: #76b9ed; }
.apps .run.on { border-top-color: #3b4446; background: #3b4446; }
.apps button:nth-child(-n+5) { width: 49px; }
.tray { display: flex; align-items: center; gap: 5px; margin-left: auto; height: 100%; }
.two { line-height: 17px; text-align: center; }
.cpu { width: 50px; margin-right: 11px; }
.lang { width: 24px; font-size: 14px; text-align: center; }
.clock { width: 68px; margin-left: 9px; line-height: 19px; }
.notes { position: relative; width: 51px; height: 24px; padding: 3px 0 0 16px; }
.notes b { position: absolute; left: 22px; top: 8px; width: 20px; height: 20px; border: 1px solid #aaa; border-radius: 50%; background: #333; font-size: 11px; line-height: 18px; text-align: center; }

.editor { position: absolute; left: 308px; top: 59px; display: flex; flex-direction: column; width: 751px; height: 645px; background: #efefef; box-shadow: 0 2px 14px rgba(0, 0, 0, .4); }
.editor header { display: flex; flex: none; align-items: center; justify-content: space-between; height: 30px; padding: 0 1px 0 8px; background: #fff; color: #999; }
.editor header button { justify-content: center; width: 19px; height: 19px; margin-top: 5px; background: #e3e3e3; color: #fff; }
.edtools { flex: none; height: 28px; padding: 0 0 2px 5px; border-top: 1px solid #eee; }
.dots { flex: none; width: 2px; height: 16px; background: repeating-linear-gradient(#b5b5b5 0 2px, transparent 2px 4px); }
.tool { gap: 4px; margin-left: 7px; }
.edtools .dots + .tool { margin-left: 4px; }
.edtools .sep { margin-left: 6px; }
.edtools .sep + .tool { margin-left: 6px; }
.coords { flex: none; height: 28px; padding-left: 5px; }
.radios { display: flex; gap: 9px; padding: 0 13px 0 2px; }
.radios label { display: flex; align-items: center; gap: 9px; }
.radios input { flex: none; width: 11px; height: 11px; margin: 0; border: 1px solid #8a8a8a; border-radius: 50%; background: #fff; appearance: none; }
.radios input:checked { border-color: #333; background: radial-gradient(#000 0 2px, #fff 3px); }
.coords .sep { height: 16px; margin-right: 3px; }
.axisfield { display: flex; align-items: center; margin-right: 13px; white-space: nowrap; }
.num { display: flex; align-items: center; width: 78px; height: 23px; margin: 0 6px 0 9px; padding-right: 2px; border: 1px solid #767676; background: #f4f4f4; }
.num input { flex: 1; min-width: 0; padding: 0 10px 0 0; border: 0; background: none; color: #777; font: inherit; text-align: right; outline: 0; }
.canvas { flex: 1; min-height: 0; background: #000; }
.canvas svg { width: 100%; height: 100%; }
.dimtext { font-family: "DejaVu Sans Mono", monospace; font-size: 15px; font-weight: bold; }
.dyn { flex: none; height: 28px; padding: 2px; border-bottom: 1px solid #a0a0a0; }
.dyn button { justify-content: center; width: 58px; height: 23px; border: 1px solid #0078d7; background: #e1eef8; }
.actions { display: flex; flex: none; justify-content: flex-end; height: 41px; padding: 9px 13px 0 0; border-top: 1px solid #fff; }
.push { justify-content: center; width: 72px; height: 23px; margin-left: 15px; border: 1px solid #adadad; background: #e1e1e1; }
.push.cad1 { width: 106px; }
.push.cad2 { width: 114px; margin: 0 10px 0 22px; }
.edstatus { display: flex; flex: none; gap: 1px; height: 22px; background: #fff; }
.edstatus > span { width: 148px; padding: 2px 1px 0; border: 1px solid #d5d5d5; background: linear-gradient(#fbfbfb, #f0f0f0); }
.edstatus .wide { display: flex; flex: 1; justify-content: space-between; }
.wide .i12 { align-self: flex-end; }

.dialog { position: absolute; left: 148px; top: 251px; width: 411px; border: 1px solid #2f8fe6; background: #f0f0f0; box-shadow: 0 3px 16px rgba(0, 0, 0, .4); }
.dialog header { display: flex; align-items: center; justify-content: space-between; height: 25px; padding: 0 9px 0 3px; background: #fff; }
.dialog form { padding: 15px 13px 8px; }
.dialog fieldset { height: 65px; margin: 0 0 8px; padding: 1px 9px 0 7px; border: 1px solid #dcdcdc; }
.dialog legend { height: 16px; padding: 0 2px 0 0; }
.dialog textarea { display: block; width: 100%; height: 41px; padding: 2px; border: 1px solid #767676; border-radius: 0; background: #fff; color: #000; font: 10px/12px "DejaVu Sans Mono", monospace; outline: 0; resize: none; }
.dialog textarea::selection { background: #0078d7; color: #fff; }
.okrow { display: flex; justify-content: flex-end; padding: 4px 1px 0 0; }

.ime { position: absolute; left: 588px; top: 44px; display: flex; align-items: center; width: 185px; height: 24px; background: linear-gradient(90deg, transparent 7px, #fff 7px); border: 1px solid #b4c8dc; border-left: 0; }
.logo { width: 28px; height: 28px; margin: 0 6px 0 0; }
.ball { position: absolute; left: 1112px; top: -29px; display: flex; align-items: flex-end; justify-content: center; width: 48px; height: 48px; padding-bottom: 4px; border: 2px solid #c4c4c4; border-radius: 50%; background: #43c95c; box-shadow: inset 0 0 0 1px #1f8a4a, 0 1px 5px rgba(0, 0, 0, .4); color: #fff; line-height: 12px; }
</style>
